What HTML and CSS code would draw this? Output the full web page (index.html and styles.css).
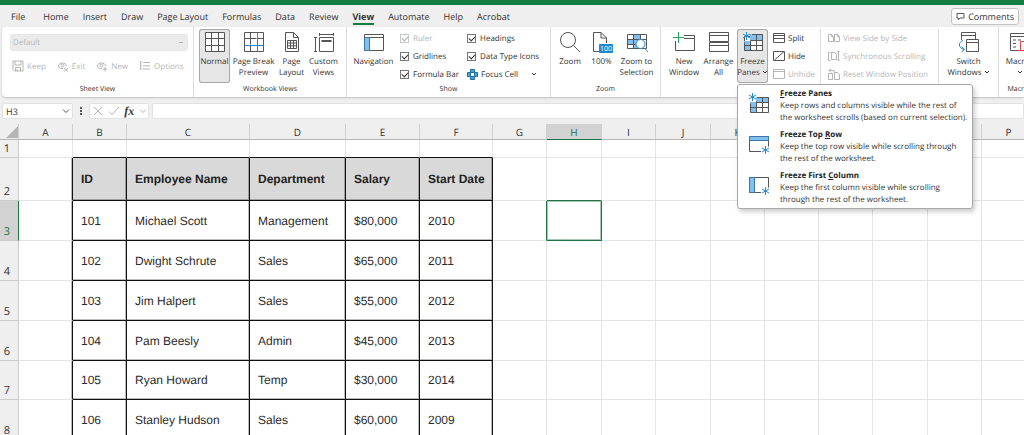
FILE: index.html
```html
<!DOCTYPE html>
<html lang="en">
<head>
<meta charset="utf-8">
<title>Employees</title>
<link rel="stylesheet" href="styles.css">
</head>
<body>
<div class="titlebar"></div>
<header class="tabs">
  <nav class="tablist">
    <button class="tab tab-file">File</button>
    <button class="tab">Home</button>
    <button class="tab">Insert</button>
    <button class="tab">Draw</button>
    <button class="tab">Page Layout</button>
    <button class="tab">Formulas</button>
    <button class="tab">Data</button>
    <button class="tab">Review</button>
    <button class="tab active">View</button>
    <button class="tab">Automate</button>
    <button class="tab">Help</button>
    <button class="tab">Acrobat</button>
  </nav>
  <button class="comments">
    <svg width="9" height="9" viewBox="0 0 9 9"><path d="M1 1.500h7v4.500H4L2.300 7.800V6H1z"/></svg>Comments
  </button>
</header>

<section class="ribbon">
  <div class="group g-sheet">
    <div class="body sheet-body">
      <select class="sheet-select" aria-label="Sheet view" disabled><option>Default</option></select>
      <div class="sheet-actions">
        <button class="small off" disabled><svg width="12" height="12" viewBox="0 0 12 12"><path d="M1 1h10v10H2.500L1 9.500zM3 1v4h6V1M3.500 11V7.500h5V11M5 9v2"/></svg>Keep</button>
        <button class="small off" disabled><svg width="12" height="12" viewBox="0 0 12 12"><path d="M1 6c2-4 7-4 9 0M1 6c1 2 3 3 5 2.500M7 8l4 3.500M11 8l-4 3.500"/><circle cx="5.500" cy="5.500" r="1.500"/></svg>Exit</button>
        <button class="small off" disabled><svg width="12" height="12" viewBox="0 0 12 12"><path d="M1 6c2-4 7-4 9 0M1 6c1 2 3 3 5 2.500M9 7v4.500M6.800 9.200h4.500"/><circle cx="5.500" cy="5.500" r="1.500"/></svg>New</button>
        <button class="small off" disabled><svg width="12" height="12" viewBox="0 0 12 12"><path d="M1 2h1.500M1 5.500h1.500M1 9h1.500M4 2.500h7M4 5.800h7M4 9h7M1.800 1v9"/></svg>Options</button>
      </div>
    </div>
    <div class="caption">Sheet View</div>
  </div>

  <div class="group g-book">
    <div class="body book-body">
      <button class="big pressed">
        <svg width="22" height="21" viewBox="0 0 22 21"><path fill="#fff" d="M1.500.5h19v19h-19z"/><path d="M7.500.5v19M14.500.5v19M1.500 6.500h19M1.500 13.500h19"/></svg>
        <span>Normal</span></button>
      <button class="big">
        <svg width="22" height="21" viewBox="0 0 22 21"><path d="M1.500.5h19v19h-19zM7.500.5v12M1.500 6.500h12M7.500 14v5.500M15 6.500h5.500"/><path class="blue" d="M14.500.5v12.500M1.500 13.500h19M14.500 13.500v6"/></svg>
        <span>Page Break<br>Preview</span></button>
      <button class="big">
        <svg width="22" height="21" viewBox="0 0 22 21"><path d="M4.500.5h8l5 5v14h-13zM12.500.5v5h5M6.500 8.500h9v8h-9zM6.500 11h9M6.500 13.800h9M9.500 8.500v8M12.500 8.500v8"/></svg>
        <span>Page<br>Layout</span></button>
      <button class="big">
        <svg width="22" height="21" viewBox="0 0 22 21"><path d="M6.500 5.500h14v14h-14zM8.500 8.500h10M8.500 9.500h10M6 2.500h15M6.500 1v3M20.500 1v3M2.500 5v15M1 5.500h3M1 19.500h3"/></svg>
        <span>Custom<br>Views</span></button>
    </div>
    <div class="caption">Workbook Views</div>
  </div>

  <div class="group g-show">
    <div class="body show-body">
      <button class="big">
        <svg width="22" height="21" viewBox="0 0 22 21"><path d="M1.500 2.500h19v16h-19zM1.500 5.500h19"/><path fill="#82bfee" stroke="#3a78a8" d="M1.500 5.500h5v13h-5z"/></svg>
        <span>Navigation</span></button>
      <div class="stack">
        <label class="check off"><input type="checkbox" checked disabled>Ruler</label>
        <label class="check"><input type="checkbox" checked>Gridlines</label>
        <label class="check"><input type="checkbox" checked>Formula Bar</label>
      </div>
      <div class="stack">
        <label class="check"><input type="checkbox" checked>Headings</label>
        <label class="check"><input type="checkbox" checked>Data Type Icons</label>
        <button class="small focus"><svg width="11" height="11" viewBox="0 0 11 11"><path fill="#4aa3df" stroke="#1c6f9f" d="M3.500.5h4v3h3v4h-3v3h-4v-3h-3v-4h3z"/><path fill="#fff" stroke="#1c6f9f" d="M3.500 3.500h4v4h-4z"/></svg>Focus Cell<svg class="chev" width="6" height="6" viewBox="0 0 6 6"><path d="M1 2l2 2 2-2"/></svg></button>
      </div>
    </div>
    <div class="caption">Show</div>
  </div>

  <div class="group g-zoom">
    <div class="body zoom-body">
      <button class="big">
        <svg width="22" height="21" viewBox="0 0 22 21"><circle cx="9" cy="8" r="7.500"/><path d="M14.500 13.500l6.500 6.500"/></svg>
        <span>Zoom</span></button>
      <button class="big">
        <svg width="22" height="21" viewBox="0 0 22 21"><path d="M8 19.500H2.500V.5H10l5.500 5.500v5M10 .5V6h5.500"/><path fill="#2488cf" stroke="#2488cf" d="M8.500 12.500h13v8h-13z"/><text class="badge" x="15" y="19">100</text></svg>
        <span>100%</span></button>
      <button class="big">
        <svg width="22" height="21" viewBox="0 0 22 21"><path fill="#82bfee" stroke="none" d="M8 3h6v13H8zM2 7h12v5H2z"/><path d="M1.500 2.500h19v14h-19zM7.500 2.500v14M14.500 2.500v5M1.500 7.500h19M1.500 12.500h8"/><circle fill="#fff" class="blue" cx="14.500" cy="12" r="4.500"/><path class="blue" d="M18 15.500l4 4.500"/></svg>
        <span>Zoom to<br>Selection</span></button>
    </div>
    <div class="caption">Zoom</div>
  </div>

  <div class="group g-window">
    <div class="body window-body">
      <button class="big">
        <svg width="22" height="21" viewBox="0 0 22 21"><path d="M11 3.500h10.500v15h-19V9M11 6.500h10.500"/><path stroke="#2ba55a" d="M5.500 0v11M0 5.500h11"/></svg>
        <span>New<br>Window</span></button>
      <button class="big">
        <svg width="22" height="21" viewBox="0 0 22 21"><path d="M1.500.5h19v9h-19zM1.500 3.500h19M1.500 10.500h19v9h-19zM1.500 13.500h19"/></svg>
        <span>Arrange<br>All</span></button>
      <div class="menu-anchor">
        <button class="big pressed" aria-expanded="true">
          <svg width="22" height="21" viewBox="0 0 22 21"><path fill="#fff" d="M2.500 4.500h18v14h-18z"/><path fill="#82bfee" stroke="none" d="M8 2h13v6H8zM2 9h6v10H2z"/><path d="M10 2.500h10.500v16h-18v-8M8.500 8.500v10M14.500 2.500v16M2.500 13.500h18M8.500 8.500h12"/><path class="blue" d="M4.500 0v8M1 2l7 4M8 2L1 6"/></svg>
          <span>Freeze<br>Panes <svg class="chev" width="6" height="6" viewBox="0 0 6 6"><path d="M1 2l2 2 2-2"/></svg></span></button>
        <div class="menu" role="menu">
          <button class="item" role="menuitem">
            <svg width="22" height="21" viewBox="0 0 22 21"><path fill="#82bfee" stroke="none" d="M8 4h13v5H8zM2 9h6v10H2z"/><path d="M9 4.500h11.500v15h-18v-9M8.500 8.500v11M14.500 4.500v15M2.500 14.500h18M8.500 9.500h12"/><path class="blue" d="M4.500 0v8M1 2l7 4M8 2L1 6"/></svg>
            <span><b><u>F</u>reeze Panes</b>Keep rows and columns visible while the rest of<br>the worksheet scrolls (based on current selection).</span></button>
          <button class="item" role="menuitem">
            <svg width="22" height="21" viewBox="0 0 22 21"><path d="M13 17.500H1.500v-15h19v10"/><path fill="#82bfee" stroke="#3a78a8" d="M1.500 2.500h19v4h-19z"/><path class="blue" d="M17.500 12v8M14 14l7 4M21 14l-7 4"/></svg>
            <span><b>Freeze Top <u>R</u>ow</b>Keep the top row visible while scrolling through<br>the rest of the worksheet.</span></button>
          <button class="item" role="menuitem">
            <svg width="22" height="21" viewBox="0 0 22 21"><path d="M13 17.500H1.500v-15h19v10"/><path fill="#82bfee" stroke="#3a78a8" d="M1.500 2.500h5v15h-5z"/><path class="blue" d="M17.500 12v8M14 14l7 4M21 14l-7 4"/></svg>
            <span><b>Freeze First <u>C</u>olumn</b>Keep the first column visible while scrolling<br>through the rest of the worksheet.</span></button>
        </div>
      </div>
      <div class="stack split">
        <button class="small"><svg width="12" height="12" viewBox="0 0 12 12"><path d="M.5 1.500h11v9H.5zM.5 3.500h11M.5 6.500h11"/></svg>Split</button>
        <button class="small"><svg width="12" height="12" viewBox="0 0 12 12"><path d="M.5 1.500h11v9H.5zM1 10.500l10-9"/></svg>Hide</button>
        <button class="small off" disabled><svg width="12" height="12" viewBox="0 0 12 12"><path d="M.5 1.500h11v9H.5zM.5 3.500h11"/></svg>Unhide</button>
      </div>
      <div class="stack sync">
        <button class="small off" disabled><svg width="12" height="12" viewBox="0 0 12 12"><path d="M.5 2.500h3l2 2v5h-5zM6.500 2.500h3l2 2v5h-5zM3.500 2.500v2h2M9.500 2.500v2h2"/></svg>View Side by Side</button>
        <button class="small off" disabled><svg width="12" height="12" viewBox="0 0 12 12"><path d="M2.500 2.500h-2v8h2M3.500 2.500h3l2 2v5h-5zM10.500 1v10M9 2.500L10.500 1 12 2.500M9 9.500l1.500 1.500L12 9.500"/></svg>Synchronous Scrolling</button>
        <button class="small off" disabled><svg width="12" height="12" viewBox="0 0 12 12"><path d="M.5 5.500h4v6h-4zM6.500 4.500h3l2 2v5h-5zM1 2.500h5v2M3 .5l-2 2 2 2"/></svg>Reset Window Position</button>
      </div>
      <button class="big switch">
        <svg width="22" height="21" viewBox="0 0 22 21"><path d="M3.500 8V.5h14V7M3.500 3.500h14M8.500 7.500h12v12h-12zM8.500 10.500h12"/><path class="blue" d="M5 8.500C0 10 0 16 6 17.500M3.500 14.500l3 3-3 2.500"/></svg>
        <span>Switch<br>Windows <svg class="chev" width="6" height="6" viewBox="0 0 6 6"><path d="M1 2l2 2 2-2"/></svg></span></button>
    </div>
    <div class="caption"></div>
  </div>

  <div class="group g-macro">
    <div class="body macro-body">
      <button class="big">
        <svg width="22" height="21" viewBox="0 0 22 21"><path d="M1.500 1.500h19v17h-19zM1.500 4.500h19M4 8h3M9 8h3M4 11.500h3M4 15h3"/><path fill="#fff" stroke="#e04848" d="M11.500 9.500h10v9h-10zM9 18.500h6"/></svg>
        <span>Macros<br><svg class="chev" width="6" height="6" viewBox="0 0 6 6"><path d="M1 2l2 2 2-2"/></svg></span></button>
    </div>
    <div class="caption">Macros</div>
  </div>
</section>

<section class="formula-bar">
  <label class="name-box"><input type="text" value="H3" aria-label="Name box"><svg width="8" height="8" viewBox="0 0 8 8"><path d="M1 2.500l3 3 3-3"/></svg></label>
  <svg class="grip" width="4" height="10" viewBox="0 0 4 10"><path stroke-dasharray="2 1" stroke-width="2" d="M2 1v8"/></svg>
  <div class="fx-box">
    <button aria-label="Cancel"><svg class="pale" width="10" height="10" viewBox="0 0 10 10"><path d="M1 1l8 8M9 1L1 9"/></svg></button>
    <button aria-label="Enter"><svg class="pale" width="12" height="10" viewBox="0 0 12 10"><path d="M1 5.500L4 8.500 11 1"/></svg></button>
    <button class="fx">fx</button>
    <svg class="pale" width="8" height="8" viewBox="0 0 8 8"><path d="M1 2.500l3 3 3-3"/></svg>
  </div>
  <input class="formula" type="text" aria-label="Formula">
</section>

<main class="sheet">
  <table>
    <colgroup><col class="w19"><col class="w54"><col class="w54"><col class="w123"><col class="w96"><col class="w74"><col class="w73"><col class="w54"><col class="w55"><col class="w54"><col class="w55"><col class="w54"><col class="w54"><col class="w54"><col class="w55"><col class="w54"><col class="w54"></colgroup>
    <thead>
      <tr><th class="corner"><svg width="12" height="12" viewBox="0 0 12 12"><path d="M12 0v12H0z"/></svg></th><th>A</th><th>B</th><th>C</th><th>D</th><th>E</th><th>F</th><th>G</th><th class="current">H</th><th>I</th><th>J</th><th>K</th><th>L</th><th>M</th><th>N</th><th>O</th><th>P</th></tr>
    </thead>
    <tbody>
      <tr class="h18"><th>1</th><td></td><td class="edge-b"></td><td class="edge-b"></td><td class="edge-b"></td><td class="edge-b"></td><td class="edge-b"></td><td></td><td></td><td></td><td></td><td></td><td></td><td></td><td></td><td></td><td></td></tr>
      <tr class="h43"><th>2</th><td class="edge-r"></td><td class="head">ID</td><td class="head">Employee Name</td><td class="head">Department</td><td class="head">Salary</td><td class="head">Start Date</td><td></td><td class="above"></td><td></td><td></td><td></td><td></td><td></td><td></td><td></td><td></td></tr>
      <tr class="h40"><th class="current">3</th><td class="edge-r"></td><td class="data">101</td><td class="data">Michael Scott</td><td class="data">Management</td><td class="data">$80,000</td><td class="data">2010</td><td class="before"></td><td class="selected"></td><td></td><td></td><td></td><td></td><td></td><td></td><td></td><td></td></tr>
      <tr class="h40"><th>4</th><td class="edge-r"></td><td class="data">102</td><td class="data">Dwight Schrute</td><td class="data">Sales</td><td class="data">$65,000</td><td class="data">2011</td><td></td><td></td><td></td><td></td><td></td><td></td><td></td><td></td><td></td><td></td></tr>
      <tr class="h40"><th>5</th><td class="edge-r"></td><td class="data">103</td><td class="data">Jim Halpert</td><td class="data">Sales</td><td class="data">$55,000</td><td class="data">2012</td><td></td><td></td><td></td><td></td><td></td><td></td><td></td><td></td><td></td><td></td></tr>
      <tr class="h40"><th>6</th><td class="edge-r"></td><td class="data">104</td><td class="data">Pam Beesly</td><td class="data">Admin</td><td class="data">$45,000</td><td class="data">2013</td><td></td><td></td><td></td><td></td><td></td><td></td><td></td><td></td><td></td><td></td></tr>
      <tr class="h39"><th>7</th><td class="edge-r"></td><td class="data">105</td><td class="data">Ryan Howard</td><td class="data">Temp</td><td class="data">$30,000</td><td class="data">2014</td><td></td><td></td><td></td><td></td><td></td><td></td><td></td><td></td><td></td><td></td></tr>
      <tr class="h40"><th>8</th><td class="edge-r"></td><td class="data">106</td><td class="data">Stanley Hudson</td><td class="data">Sales</td><td class="data">$60,000</td><td class="data">2009</td><td></td><td></td><td></td><td></td><td></td><td></td><td></td><td></td><td></td><td></td></tr>
    </tbody>
  </table>
</main>
</body>
</html>
```
FILE: styles.css
```css
* { box-sizing: border-box; }
body {
  margin: 0;
  height: 100vh;
  display: flex;
  flex-direction: column;
  overflow: hidden;
  background: #efefef;
  color: #333;
  font-family: "Open Sans", "Noto Sans", sans-serif;
  font-size: 9px;
  text-rendering: geometricPrecision;
}
button, input, select { font: inherit; color: inherit; text-rendering: inherit; }
button { border: 0; padding: 0; background: none; white-space: nowrap; }
svg { fill: none; stroke: #555; flex: none; }
.blue { stroke: #2488cf; }
.badge { font-size: 7px; fill: #fff; stroke: none; text-anchor: middle; }

.titlebar { height: 5px; background: #137c41; flex: none; }
.tabs { height: 22px; flex: none; display: flex; justify-content: space-between; padding: 3px 5px 0 11px; }
.tablist { display: flex; gap: 14px; align-items: flex-start; }
.tab { height: 17px; padding-top: 2px; border-bottom: 2px solid transparent; }
.tab-file { margin-right: 4px; }
.tab.active { font-weight: 700; border-color: #137c41; }
.comments { display: flex; align-items: center; gap: 3px; height: 17px; padding: 0 4px; background: #fff; border: 1px solid #c4c4c4; border-radius: 3px; }

.ribbon {
  flex: none;
  display: flex;
  height: 70px;
  margin-left: 2px;
  background: #fff;
  border-radius: 4px 0 0 4px;
  box-shadow: 0 1px 2px #0003;
  position: relative;
  z-index: 2;
  font-size: 8px;
}
.group { flex: none; display: flex; flex-direction: column; padding-top: 2px; position: relative; }
.group + .group { border-left: 1px solid #dcdcdc; }
.body { height: 55px; flex: none; }
.caption { height: 12px; line-height: 12px; font-size: 7px; text-align: center; }
.g-sheet { width: 191px; }
.g-book { width: 153px; }
.g-show { width: 204px; }
.g-zoom { width: 110px; }
.g-window { width: 338px; }
.g-macro { width: 42px; }

.big { display: flex; flex-direction: column; align-items: center; height: 54px; padding-top: 3px; line-height: 11px; gap: 3px; }
.big span { text-align: center; }
.pressed { background: #e6e6e6; box-shadow: inset 0 0 0 1px #a8a8a8; border-radius: 3px; }
.small { display: flex; align-items: center; gap: 3px; height: 18px; }
.off, .off svg { color: #b5b5b5; stroke: #b5b5b5; }
.off { stroke: none; }
.stack { display: grid; grid-template-rows: repeat(3, 18px); justify-items: start; }

.sheet-body { padding: 5px 5px 0 8px; display: flex; flex-direction: column; gap: 6px; }
.sheet-select {
  appearance: none;
  width: 100%;
  height: 17px;
  padding: 0 2px;
  border: 1px solid #e6e6e6;
  border-radius: 3px;
  background: linear-gradient(#b5b5b5, #b5b5b5) right 4px center / 4px 1px no-repeat #ebebeb;
  color: #b8b8b8;
  opacity: 1;
}
.sheet-actions { display: flex; gap: 11px; padding-left: 2px; }

.book-body { display: grid; grid-template-columns: 31px 47px 29px 35px; padding-left: 5px; }
.show-body { display: grid; grid-template-columns: 53px 67px 1fr; }
.zoom-body { display: grid; grid-template-columns: 38px 25px 45px; }
.window-body { display: grid; grid-template-columns: 40px 29px 31px 56px 118px 1fr; padding-left: 3px; }
.window-body .menu-anchor { margin: 0 -4px 0 4px; }
.macro-body { display: grid; }

.check { display: flex; align-items: center; gap: 4px; white-space: nowrap; }
.check input {
  appearance: none;
  width: 9px;
  height: 9px;
  margin: 0;
  border: 1px solid #777;
  display: grid;
  place-items: center;
}
.check input:checked::before { content: ""; width: 5px; height: 3px; border: solid #333; border-width: 0 0 1px 1px; transform: rotate(-45deg); }
.check.off input { opacity: .4; }
.chev { stroke: #333; }
.focus .chev { margin-left: 10px; }

.split { padding-left: 9px; }
.sync { padding-left: 7px; border-left: 1px solid #dcdcdc; }
.switch { border-left: 1px solid #dcdcdc; }

.menu-anchor { position: relative; display: grid; align-content: start; }
.menu {
  position: absolute;
  top: 55px;
  left: 0;
  width: 236px;
  padding: 3px 0 2px;
  display: grid;
  gap: 5px;
  background: #fff;
  border: 1px solid #a8a8a8;
  border-radius: 3px;
  box-shadow: 2px 3px 5px #0003;
}
.item { display: flex; gap: 10px; padding: 0 0 0 10px; text-align: left; line-height: 12px; }
.item svg { margin-top: 5px; }
.item b { display: block; color: #222; }

.formula-bar { flex: none; height: 27px; padding: 6px 0 5px 2px; display: flex; align-items: center; }
.formula-bar input { border: 0; outline: 0; padding: 0; background: none; min-width: 0; }
.name-box, .fx-box, .formula-bar .formula { height: 16px; background: #fff; border: 1px solid #e2e2e2; border-radius: 2px; }
.name-box { width: 71px; display: flex; align-items: center; padding: 0 2px 0 3px; }
.name-box input { flex: 1; }
.grip { margin: 0 6px; }
.fx-box { width: 60px; display: flex; align-items: center; justify-content: space-between; padding: 0 1px 0 3px; }
.fx-box button { display: flex; }
.pale { stroke: #b5b5b5; }
.fx-box .fx { font: italic bold 12px/14px "Liberation Serif", serif; }
.formula-bar .formula { flex: 1; margin-left: 3px; background: #fff; }

.sheet { flex: 1; overflow: hidden; }
table { table-layout: fixed; width: 1036px; border-collapse: separate; border-spacing: 0; background: #fff; }
th, td { padding: 0; border: solid #e4e4e4; border-width: 0 1px 1px 0; overflow: hidden; white-space: nowrap; }
thead th { height: 16px; vertical-align: middle; font: 400 10px/12px "Open Sans", "Noto Sans", sans-serif; background: #efefef; border-color: #d0d0d0 #d0d0d0 #b5b5b5; }
tbody th { font: 400 11px/12px "Open Sans", "Noto Sans", sans-serif; vertical-align: bottom; padding: 0 4px 2px 0; background: #efefef; border-color: #ccc; }
thead .corner { text-align: right; line-height: 0; }
.corner svg { fill: #b5b5b5; stroke: none; display: inline-block; }
th.current { background: #d2d2d2; color: #217346; }
thead th.current { border-bottom-color: #217346; }
tbody th.current { border-right-color: #217346; }
.head, .data { font-family: "Liberation Sans", Arial, sans-serif; font-size: 12px; padding: 0 0 0 8px; color: #2b2b2b; border-color: #111; box-shadow: inset -1px -1px #0004; }
.head { background: #d9d9d9; font-weight: 700; color: #222; }
.edge-b { border-bottom-color: #111; }
.edge-r { border-right-color: #111; box-shadow: inset -1px 0 #0004; }
.above { border-bottom-color: #217346; }
.before { border-right-color: #217346; }
.selected { border-color: #217346; box-shadow: inset 0 0 0 1px #21734666; }
.h18 { height: 18px; }
.h39 { height: 39px; }
.h40 { height: 40px; }
.h43 { height: 43px; }
.w19 { width: 19px; }
.w54 { width: 54px; }
.w55 { width: 55px; }
.w73 { width: 73px; }
.w74 { width: 74px; }
.w96 { width: 96px; }
.w123 { width: 123px; }
```
